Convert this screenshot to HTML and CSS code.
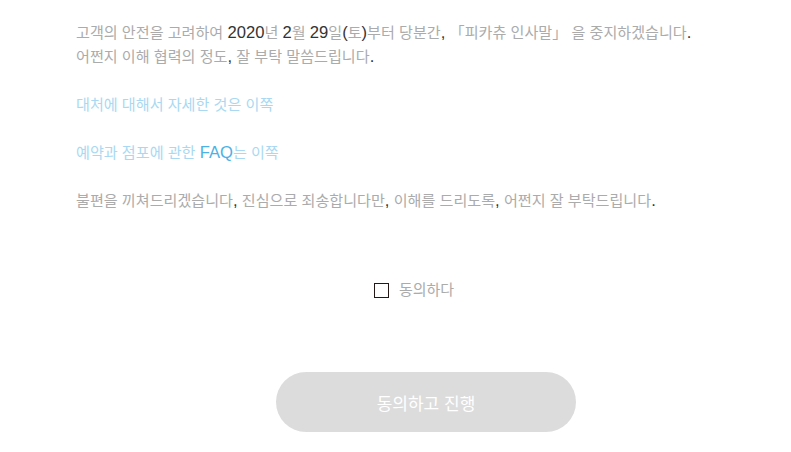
FILE: index.html
```html
<!DOCTYPE html>
<html lang="ko">
<head>
<meta charset="utf-8">
<link rel="stylesheet" href="styles.css">
</head>
<body>
<main class="page">
  <div class="notice">
    <p>고객의 안전을 고려하여 <span class="lt">2020</span>년 <span class="lt">2</span>월 <span class="lt">29</span>일<span class="lt">(</span>토<span class="lt">)</span>부터 당분간<span class="lt">,</span> 「피카츄 인사말」 을 중지하겠습니다<span class="lt">.</span><br>어쩐지 이해 협력의 정도<span class="lt">,</span> 잘 부탁 말씀드립니다<span class="lt">.</span></p>
    <p><a class="link" href="#">대처에 대해서 자세한 것은 이쪽</a></p>
    <p><a class="link" href="#">예약과 점포에 관한 <span class="lk">FAQ</span>는 이쪽</a></p>
    <p>불편을 끼쳐드리겠습니다<span class="lt">,</span> 진심으로 죄송합니다만<span class="lt">,</span> 이해를 드리도록<span class="lt">,</span> 어쩐지 잘 부탁드립니다<span class="lt">.</span></p>
  </div>
  <label class="agree">
    <span class="box"></span>
    <span class="agree-text">동의하다</span>
  </label>
  <div class="actions">
    <button class="proceed" type="button">동의하고 진행</button>
  </div>
</main>
</body>
</html>
```
FILE: styles.css
```css
html, body {
  margin: 0;
  padding: 0;
  background: #fff;
}
body {
  font-family: "Liberation Sans", "Noto Sans CJK KR", sans-serif;
  font-size: 15.1px;
  color: #ababab;
}
.page {
  padding-top: 21px;
  margin-left: 76px;
  width: 700px;
}
.notice p {
  margin: 0 0 24px;
  line-height: 24px;
  white-space: nowrap;
}
.lt {
  color: #333;
  font-size: 16.6px;
}
.link {
  color: #a9d9f2;
  text-decoration: none;
}
.lk {
  color: #4cb1e6;
  font-size: 16.6px;
}
.agree {
  display: flex;
  align-items: center;
  justify-content: center;
  gap: 10px;
  margin-top: 67px;
  padding-right: 24px;
}
.box {
  width: 13px;
  height: 13px;
  border: 1px solid #231815;
}
.agree-text {
  color: #ababab;
  font-size: 15px;
  line-height: 20px;
}
.actions {
  display: flex;
  justify-content: center;
  margin-top: 72px;
}
.proceed {
  width: 300px;
  height: 60px;
  border: 0;
  border-radius: 30px;
  background: #dcdcdc;
  color: #fff;
  font-family: "Liberation Sans", "Noto Sans CJK KR", sans-serif;
  font-size: 17px;
}
```
